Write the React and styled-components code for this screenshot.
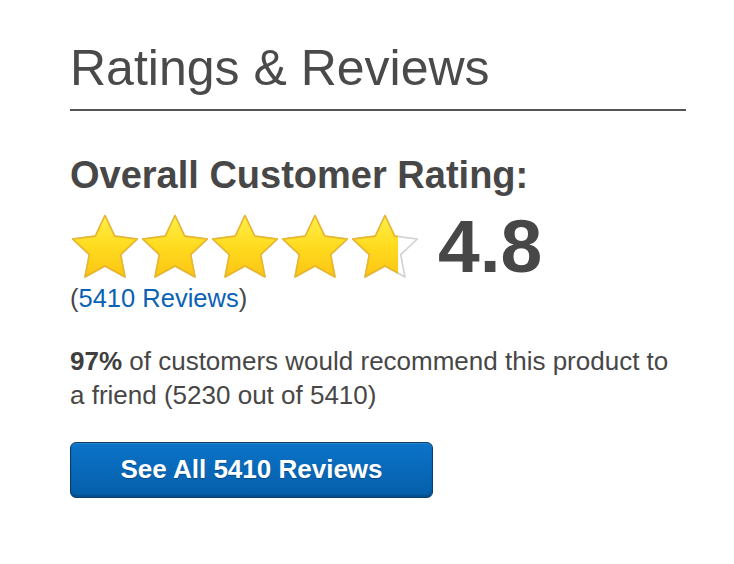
import React from "react";
import styled, { createGlobalStyle } from "styled-components";

const Global = createGlobalStyle`
  html, body { margin: 0; padding: 0; background: #ffffff; }
  body {
    font-family: "Liberation Sans", Arial, Helvetica, sans-serif;
    color: #474747;
  }
`;

const Page = styled.div`
  padding: 38px 0 40px 70px;
  width: 616px;
`;

const Title = styled.h1`
  margin: 0;
  padding-bottom: 11px;
  border-bottom: 2px solid #555555;
  font-size: 50px;
  line-height: 60px;
  font-weight: 400;
  color: #4a4a4a;
`;

const Heading = styled.h2`
  margin: 42px 0 0;
  font-size: 38px;
  line-height: 44px;
  font-weight: 700;
  color: #474747;
`;

const RatingRow = styled.div`
  margin-top: 17px;
  display: flex;
  align-items: center;
  gap: 18px;
`;

const StarsBox = styled.div`
  position: relative;
  width: 350px;
  height: 64px;
  flex: none;
`;

const StarLayer = styled.div`
  display: flex;
  height: 64px;
  width: 350px;
`;

const FillMask = styled.div`
  position: absolute;
  left: 0;
  top: 0;
  height: 64px;
  width: ${(p) => p.$width}px;
  overflow: hidden;
`;

const Score = styled.div`
  font-size: 75px;
  line-height: 64px;
  font-weight: 700;
  color: #474747;
`;

const Count = styled.div`
  margin-top: 5px;
  font-size: 25.5px;
  line-height: 30px;
  color: #474747;
`;

const CountLink = styled.a`
  color: #0a62b5;
  text-decoration: none;
`;

const Recommend = styled.p`
  margin: 31px 0 0;
  max-width: 608px;
  font-size: 26px;
  line-height: 34px;
  color: #474747;
`;

const Strong = styled.strong`
  font-weight: 700;
  color: #3e3e3e;
`;

const ReviewsButton = styled.button`
  margin-top: 30px;
  display: flex;
  align-items: center;
  justify-content: center;
  width: 363px;
  height: 56px;
  padding: 0 0 2px;
  border: 1px solid #0c3d6e;
  border-radius: 6px;
  background: linear-gradient(#0b73c7 0%, #0868b8 55%, #055ea9 100%);
  box-shadow: inset 0 -2px 2px rgba(0, 0, 0, 0.18), inset 0 1px 0 rgba(255, 255, 255, 0.12);
  color: #ffffff;
  font-family: "Liberation Sans", Arial, Helvetica, sans-serif;
  font-size: 26px;
  font-weight: 700;
  text-shadow: 0 1px 1px rgba(0, 0, 0, 0.25);
  cursor: pointer;
`;

const STAR_POINTS =
  "35,1.5 44.7,22.15 67.34,24.99 50.69,40.6 54.99,63.01 35,52 15.01,63.01 19.31,40.6 2.66,24.99 25.3,22.15";

function Star({ filled, id }) {
  return (
    <svg width="70" height="64" viewBox="0 0 70 64" style={{ flex: "none", display: "block" }}>
      {filled && (
        <defs>
          <linearGradient id={id} x1="0" y1="0" x2="0" y2="1">
            <stop offset="0" stopColor="#fff04a" />
            <stop offset="0.5" stopColor="#ffdb1f" />
            <stop offset="1" stopColor="#fbc514" />
          </linearGradient>
        </defs>
      )}
      <polygon
        points={STAR_POINTS}
        fill={filled ? `url(#${id})` : "#ffffff"}
        stroke={filled ? "#e9b52a" : "#d2d2d2"}
        strokeWidth="1.6"
        strokeLinejoin="round"
      />
    </svg>
  );
}

function Stars({ fill }) {
  const idx = [0, 1, 2, 3, 4];
  return (
    <StarsBox>
      <StarLayer>
        {idx.map((i) => (
          <Star key={i} />
        ))}
      </StarLayer>
      <FillMask $width={fill}>
        <StarLayer>
          {idx.map((i) => (
            <Star key={i} filled id={`starGrad${i}`} />
          ))}
        </StarLayer>
      </FillMask>
    </StarsBox>
  );
}

export default function App() {
  return (
    <>
      <Global />
      <Page>
        <Title>Ratings &amp; Reviews</Title>
        <Heading>Overall Customer Rating:</Heading>
        <RatingRow>
          <Stars fill={328} />
          <Score>4.8</Score>
        </RatingRow>
        <Count>
          (<CountLink href="#">5410 Reviews</CountLink>)
        </Count>
        <Recommend>
          <Strong>97%</Strong> of customers would recommend this product to a friend (5230 out of 5410)
        </Recommend>
        <ReviewsButton>See All 5410 Reviews</ReviewsButton>
      </Page>
    </>
  );
}
